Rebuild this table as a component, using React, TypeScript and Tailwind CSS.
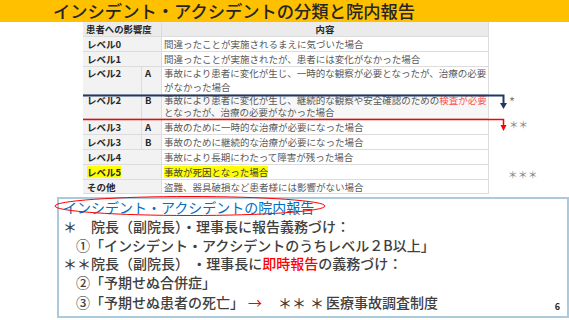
import React from "react";

type Row = {
  label: string;
  sub?: string;
  h: string;
  content: React.ReactNode;
  multi?: boolean;
  lead?: string;
  hl?: boolean;
};

const rows: Row[] = [
  { label: "レベル0", h: "h-[15px]", content: "間違ったことが実施されるまえに気づいた場合" },
  { label: "レベル1", h: "h-[15px]", content: "間違ったことが実施されたが、患者には変化がなかった場合" },
  {
    label: "レベル2",
    sub: "A",
    h: "h-[28px]",
    multi: true,
    lead: "leading-[13.5px]",
    content: (
      <>
        事故により患者に変化が生じ、一時的な観察が必要となったが、治療の必要
        <br />
        がなかった場合
      </>
    ),
  },
  {
    label: "レベル2",
    sub: "B",
    h: "h-[24px]",
    multi: true,
    lead: "leading-[11.5px]",
    content: (
      <>
        事故により患者に変化が生じ、継続的な観察や安全確認のための
        <span className="text-[#ff5050]">検査が必要</span>
        <br />
        となったが、治療の必要がなかった場合
      </>
    ),
  },
  { label: "レベル3", sub: "A", h: "h-[16px]", content: "事故のために一時的な治療が必要になった場合" },
  { label: "レベル3", sub: "B", h: "h-[15px]", content: "事故のために継続的な治療が必要になった場合" },
  { label: "レベル4", h: "h-[15px]", content: "事故により長期にわたって障害が残った場合" },
  { label: "レベル5", h: "h-[15px]", hl: true, content: "事故が死因となった場合" },
  { label: "その他", h: "h-[14px]", content: "盗難、器具破損など患者様には影響がない場合" },
];

function TableRow({ r }: { r: Row }) {
  const align = r.multi ? "items-start" : "items-center";
  const lbl = `flex ${align} bg-[#f2f2f2] border-r border-[#dcdcdc] font-bold text-[9.5px] text-[#262626] ${r.lead ?? "leading-[12px]"}`;
  return (
    <div className={`flex ${r.h} border-b border-[#dcdcdc]`}>
      {r.sub ? (
        <>
          <div className={`w-[59px] pl-[4px] ${lbl}`}>{r.label}</div>
          <div className={`w-[20px] pl-[3px] ${lbl}`}>{r.sub}</div>
        </>
      ) : (
        <div className={`w-[79px] pl-[4px] ${lbl}`}>
          <span className={r.hl ? "bg-[#ffff00]" : ""}>{r.label}</span>
        </div>
      )}
      <div
        className={`flex-1 flex ${align} pl-[2px] whitespace-nowrap text-[9.5px] text-[#595959] ${r.lead ?? "leading-[12px]"} ${
          r.sub === "B" && r.multi ? "bg-[#f7f7f7]" : "bg-white"
        }`}
      >
        <span className={r.hl ? "bg-[#ffff00] text-[#404040]" : ""}>{r.content}</span>
      </div>
    </div>
  );
}

export default function App() {
  return (
    <div className="relative w-[569px] h-[320px] overflow-hidden bg-white font-['Noto_Sans_CJK_JP',sans-serif]">
      <div className="h-[22px] bg-[#ffc000] flex items-center pl-[53px] text-[17.3px] leading-[22px] font-medium text-[#262626] whitespace-nowrap">
        インシデント・アクシデントの分類と院内報告
      </div>

      <div className="flex">
        <div className="ml-[83px] w-[406px] border-r border-[#dcdcdc]">
          <div className="flex h-[15px] bg-[#ebebeb] border-b border-[#dcdcdc] font-bold text-[9.4px] leading-[12px] text-[#262626]">
            <div className="w-[79px] flex items-center pl-[3px] border-r border-[#dcdcdc]">患者への影響度</div>
            <div className="flex-1 flex items-center justify-center">内容</div>
          </div>
          {rows.map((r, i) => (
            <TableRow key={i} r={r} />
          ))}
        </div>
        <div className="flex flex-col pl-[20px] text-[#7f7f7f] text-[9.5px] leading-[10px]">
          <div className="mt-[73px] h-[10px] text-[13px] leading-[10px] pt-[2px]">*</div>
          <div className="mt-[14px] h-[10px]">＊＊</div>
          <div className="mt-[40px] h-[10px] -ml-[1px] tracking-[0.5px]">＊＊＊</div>
        </div>
      </div>

      <div className="ml-[57px] mt-[3px] w-[512px] h-[121px] border-2 border-[#abcadb] pl-[4px] flex flex-col text-[14px] leading-[17px] font-medium text-[#404040] whitespace-nowrap">
        <div className="h-[17px] flex items-center text-[#0070c0] font-normal">インシデント・アクシデントの院内報告</div>
        <div className="h-[20px] flex items-center">＊　院長（副院長）・理事長に報告義務づけ：</div>
        <div className="h-[18px] flex items-center pl-[13px]">①「インシデント・アクシデントのうちレベル２B以上」</div>
        <div className="h-[18px] flex items-center">
          ＊＊院長（副院長） ・理事長に<span className="text-[#ff0000]">即時報告</span>の義務づけ：
        </div>
        <div className="h-[20px] flex items-center pl-[13px]">②「予期せぬ合併症」</div>
        <div className="h-[20px] flex items-center pl-[13px]">
          ③「予期せぬ患者の死亡」
          <span className="ml-[4px] text-[#ff0000] font-normal">→</span>
          <span className="ml-[16px]">＊＊</span>
          <span className="ml-[4px]">＊</span>
          <span className="ml-[2px]">医療事故調査制度</span>
          <span className="ml-auto mr-[7px] self-end text-[9px] font-bold text-[#262626] leading-none mb-[1px]">6</span>
        </div>
      </div>

      <svg className="absolute inset-0 pointer-events-none" width="569" height="320" viewBox="0 0 569 320">
        <path d="M83 95.5 H503.5 V104" fill="none" stroke="#203864" strokeWidth="2" />
        <polygon points="500,103 507,103 503.5,109" fill="#203864" />
        <path d="M83 119.5 H503.5 V126" fill="none" stroke="#ff0000" strokeWidth="1.5" />
        <polygon points="500.5,125 506.5,125 503.5,131" fill="#ff0000" />
        <ellipse cx="190" cy="206" rx="135" ry="9.5" fill="none" stroke="#ff0000" strokeWidth="1" />
      </svg>
    </div>
  );
}
